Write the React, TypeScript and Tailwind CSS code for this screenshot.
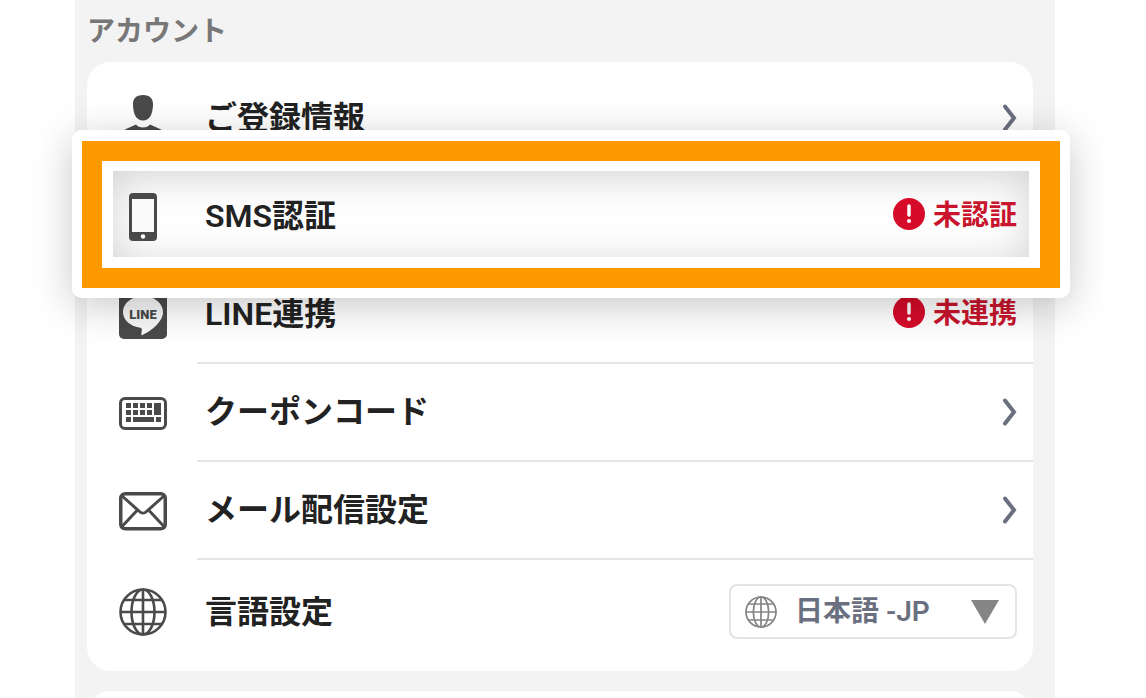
import React from "react";

const IconUser = () => (
  <svg width="48" height="48" viewBox="0 0 48 48" fill="#4a4a4a">
    <path d="M24 0c7 0 10.500 4 10 10.500C33.500 19 31 25.500 24 25.500S14.500 19 14 10.500C13.500 4 17 0 24 0z" />
    <path d="M5 36c0-1 1-1.500 2-2l10-4.500c2.500 4 11.500 4 14 0L41 34c1 .5 2 1 2 2v12H5z" />
  </svg>
);

const IconPhone = () => (
  <svg width="48" height="48" viewBox="0 0 48 48">
    <rect x="10" y="0" width="28" height="48" rx="4" fill="#4a4a4a" />
    <rect x="13" y="6" width="22" height="33" fill="#fafafa" />
    <circle cx="24" cy="43.500" r="2.200" fill="#fff" />
  </svg>
);

const IconLine = () => (
  <svg width="48" height="48" viewBox="0 0 48 48">
    <rect width="48" height="48" rx="5" fill="#4a4a4a" />
    <path
      d="M24 5C13 5 4 12 4 21c0 8 7.500 14.500 17.500 15.800 1.500.4 1.500 1.500 1.200 3.500l-.4 3.200c0 .7.500.9 1.200.5C30 41 44 32 44 21 44 12 35 5 24 5z"
      fill="#f7f7f7"
    />
    <text
      x="24"
      y="28"
      textAnchor="middle"
      fontFamily="Roboto, sans-serif"
      fontSize="13"
      fontWeight="900"
      fill="#4a4a4a"
    >
      LINE
    </text>
  </svg>
);

const IconKeyboard = () => (
  <svg width="48" height="48" viewBox="0 0 48 48" fill="#4a4a4a">
    <rect x="1.500" y="9.500" width="45" height="30" rx="4.500" fill="none" stroke="#4a4a4a" strokeWidth="3" />
    <path d="M7 14h5v5H7zM14 14h5v5h-5zM21 14h5v5h-5zM28 14h5v5h-5zM35 14h7v12h-7z" />
    <path d="M7 21h5v5H7zM14 21h5v5h-5zM21 21h5v5h-5zM28 21h5v5h-5z" />
    <path d="M7 28h5v5H7zM14 28h21v5H14zM37 28h5v5h-5z" />
  </svg>
);

const IconMail = () => (
  <svg
    width="48"
    height="48"
    viewBox="0 0 48 48"
    fill="none"
    stroke="#4a4a4a"
    strokeWidth="3.500"
  >
    <rect x="1.750" y="6.750" width="44.500" height="35" rx="4.500" />
    <path d="M2.500 8.500 20.500 24.500c2 2 5 2 7 0L45.500 8.500M2.500 40 18 23.500M45.500 40 30 23.500" strokeWidth="3" />
  </svg>
);

const IconGlobe = ({ size, color }: { size: number; color: string }) => (
  <svg
    width={size}
    height={size}
    viewBox="0 0 48 48"
    fill="none"
    stroke={color}
    strokeWidth="2.600"
  >
    <circle cx="24" cy="24" r="22.500" />
    <ellipse cx="24" cy="24" rx="11.500" ry="22.500" />
    <path d="M24 1v46M1 24h46M6 12h36M6 36h36" />
  </svg>
);

const Chevron = () => (
  <svg
    width="14"
    height="28"
    viewBox="0 0 14 28"
    fill="none"
    stroke="#6b7080"
    strokeWidth="4"
    strokeLinecap="round"
  >
    <path d="M2 2.500L11 14 2 25.500" />
  </svg>
);

const Status = ({ text }: { text: string }) => (
  <span className="flex items-start gap-2 text-[28px] leading-9 font-semibold text-[#c8142d]">
    <svg width="32" height="32" viewBox="0 0 32 32">
      <circle cx="16" cy="16" r="16" fill="#d60b29" />
      <path d="M16 8v9" stroke="#fff" strokeWidth="3.500" strokeLinecap="round" />
      <circle cx="16" cy="23" r="2" fill="#fff" />
    </svg>
    {text}
  </span>
);

// white / orange / white frame around the row that is being explained
const Highlight = () => (
  <div className="pointer-events-none absolute -top-[38px] -right-[37px] -bottom-[32px] -left-[15px] flex rounded-[10px] border-[10px] border-t-11 border-white shadow-[0_8px_40px_rgba(0,0,0,0.22)]">
    <div className="flex grow border-20 border-[#ff9900]">
      <div className="grow border-11 border-t-10 border-white">
        <div className="h-full shadow-[inset_0_6px_40px_rgba(0,0,0,0.18)]" />
      </div>
    </div>
  </div>
);

interface row_types {
  icon: React.ReactNode;
  label: string;
  right: React.ReactNode;
  highlight?: boolean;
}

const rows: row_types[] = [
  { icon: <IconUser />, label: "ご登録情報", right: <Chevron /> },
  {
    icon: <IconPhone />,
    label: "SMS認証",
    right: <Status text="未認証" />,
    highlight: true,
  },
  { icon: <IconLine />, label: "LINE連携", right: <Status text="未連携" /> },
  { icon: <IconKeyboard />, label: "クーポンコード", right: <Chevron /> },
  { icon: <IconMail />, label: "メール配信設定", right: <Chevron /> },
];

const App = () => {
  return (
    <div className="h-screen overflow-hidden bg-white pr-[91px] pl-[75px] font-['Roboto','Noto_Sans_CJK_JP',sans-serif]">
      <main className="flex h-full flex-col bg-[#f3f3f3] pr-[22px] pl-3">
        <h2 className="h-[62px] shrink-0 pt-3 text-[28px] leading-10 font-semibold text-[#777]">
          アカウント
        </h2>

        <section className="shrink-0 rounded-3xl bg-white py-2">
          <ul>
            {rows.map((row) => (
              <li key={row.label} className={row.highlight ? "relative z-10" : ""}>
                {row.highlight && <Highlight />}
                <a href="#" className="relative flex h-[98px] items-stretch pl-8">
                  <span className="flex w-[78px] items-center">{row.icon}</span>
                  <span
                    className={`flex grow items-center justify-between border-b-2 pr-4 pl-2 ${
                      row.highlight ? "border-transparent" : "border-[#e5e5e5]"
                    }`}
                  >
                    <span className="text-[32px] leading-10 font-semibold text-[#222]">
                      {row.label}
                    </span>
                    {row.right}
                  </span>
                </a>
              </li>
            ))}
          </ul>

          <div className="flex h-[103px] items-center pl-8">
            <span className="flex w-[78px] items-center">
              <IconGlobe size={48} color="#4a4a4a" />
            </span>
            <div className="flex grow items-center justify-between pr-4 pl-2">
              <label htmlFor="language" className="text-[32px] leading-10 font-semibold text-[#222]">
                言語設定
              </label>
              <div className="relative flex items-center">
                <span className="pointer-events-none absolute left-4">
                  <IconGlobe size={32} color="#858585" />
                </span>
                <select
                  id="language"
                  className="h-[55px] w-72 appearance-none rounded-lg border-2 border-[#e2e5e8] bg-transparent pl-16 text-[28px] font-semibold text-[#6b7080]"
                >
                  <option>日本語 -JP</option>
                </select>
                <svg
                  className="pointer-events-none absolute right-[18px]"
                  width="28"
                  height="24"
                  viewBox="0 0 28 24"
                  fill="#858585"
                >
                  <path d="M0 0h28L14 24z" />
                </svg>
              </div>
            </div>
          </div>
        </section>

        <section className="mt-5 h-24 shrink-0 rounded-3xl bg-white" />
      </main>
    </div>
  );
};

export default App;
